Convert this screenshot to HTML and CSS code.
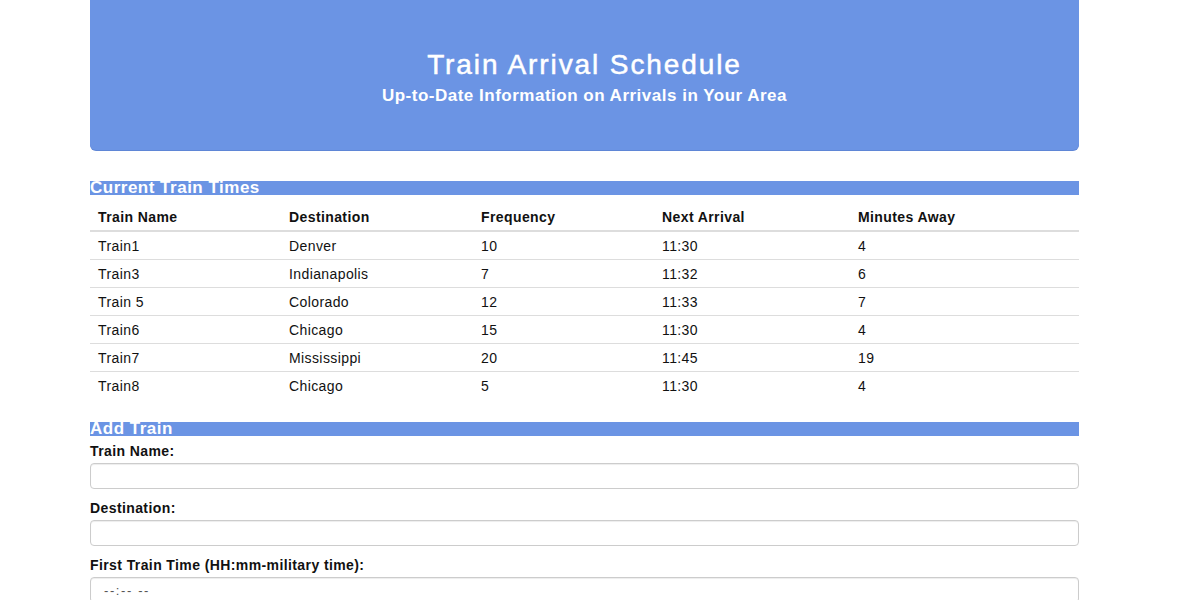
FILE: index.html
```html
<!DOCTYPE html>
<html lang="en">
<head>
<meta charset="utf-8">
<title>Train Arrival Schedule</title>
<link rel="stylesheet" href="styles.css">
</head>
<body>
<div class="container">
  <header class="jumbotron">
    <h1 class="title">Train Arrival Schedule</h1>
    <p class="subtitle">Up-to-Date Information on Arrivals in Your Area</p>
  </header>

  <section class="panel">
    <h3 class="panel-heading">Current Train Times</h3>
    <table class="table">
      <thead>
        <tr>
          <th class="c1">Train Name</th>
          <th class="c2">Destination</th>
          <th class="c3">Frequency</th>
          <th class="c4">Next Arrival</th>
          <th class="c5">Minutes Away</th>
        </tr>
      </thead>
      <tbody>
        <tr><td>Train1</td><td>Denver</td><td>10</td><td>11:30</td><td>4</td></tr>
        <tr><td>Train3</td><td>Indianapolis</td><td>7</td><td>11:32</td><td>6</td></tr>
        <tr><td>Train 5</td><td>Colorado</td><td>12</td><td>11:33</td><td>7</td></tr>
        <tr><td>Train6</td><td>Chicago</td><td>15</td><td>11:30</td><td>4</td></tr>
        <tr><td>Train7</td><td>Mississippi</td><td>20</td><td>11:45</td><td>19</td></tr>
        <tr><td>Train8</td><td>Chicago</td><td>5</td><td>11:30</td><td>4</td></tr>
      </tbody>
    </table>
  </section>

  <section class="panel add">
    <h3 class="panel-heading">Add Train</h3>
    <form class="form">
      <div class="form-group">
        <label class="label" for="name">Train Name:</label>
        <input class="input" id="name" type="text">
      </div>
      <div class="form-group">
        <label class="label" for="dest">Destination:</label>
        <input class="input" id="dest" type="text">
      </div>
      <div class="form-group">
        <label class="label" for="time">First Train Time (HH:mm-military time):</label>
        <input class="input time" id="time" type="text" placeholder="--:-- --">
      </div>
      <div class="form-group">
        <label class="label" for="freq">Frequency (min):</label>
        <input class="input" id="freq" type="text">
      </div>
    </form>
  </section>
</div>
</body>
</html>
```

FILE: styles.css
```css
html, body {
  margin: 0;
  padding: 0;
  background: #ffffff;
}

body {
  font-family: "Liberation Sans", Arial, Helvetica, sans-serif;
  font-size: 14px;
  line-height: 18px;
  letter-spacing: 0.4px;
  color: #111;
}

.container {
  width: 989px;
  margin-left: 90px;
}

.jumbotron {
  height: 150px;
  box-sizing: border-box;
  background: #6b94e4;
  border-radius: 0 0 6px 6px;
  box-shadow: 0 1px 0 #5f86d6;
  color: #fff;
  text-align: center;
  padding-top: 48px;
}

.title {
  margin: 0;
  font-size: 28px;
  line-height: 34px;
  font-weight: normal;
  letter-spacing: 1.9px;
  -webkit-text-stroke: 0.5px #fff;
}

.subtitle {
  margin: 4px 0 0;
  font-size: 17px;
  line-height: 20px;
  font-weight: bold;
  letter-spacing: 0.5px;
}

.panel {
  margin-top: 31px;
}

.panel.add {
  margin-top: 23px;
}

.panel-heading {
  margin: 0;
  height: 14px;
  background: #6b94e4;
  color: #fff;
  font-size: 17px;
  line-height: 14px;
  font-weight: bold;
  letter-spacing: 0.5px;
}

.table {
  width: 100%;
  border-collapse: collapse;
}

.table th {
  text-align: left;
  font-weight: bold;
  padding: 13px 8px 4px;
  border-bottom: 2px solid #ddd;
}

.table td {
  padding: 5px 8px 4px;
  border-bottom: 1px solid #ddd;
}

.table tbody tr:last-child td {
  border-bottom: none;
}

.c1 { width: 175px; }
.c2 { width: 176px; }
.c3 { width: 165px; }
.c4 { width: 180px; }

.form {
  padding-top: 6px;
}

.form-group {
  margin-bottom: 10px;
}

.label {
  display: block;
  font-weight: bold;
  margin-bottom: 3px;
}

.input {
  display: block;
  box-sizing: border-box;
  width: 100%;
  height: 26px;
  margin: 0;
  padding: 4px 13px;
  border: 1px solid #ccc;
  border-radius: 4px;
  box-shadow: inset 0 1px 1px rgba(0, 0, 0, 0.075);
  font-family: inherit;
  font-size: 13px;
  color: #555;
  background: #fff;
}

.input.time {
  letter-spacing: 1.6px;
}

.input::placeholder {
  color: #555;
}
```
